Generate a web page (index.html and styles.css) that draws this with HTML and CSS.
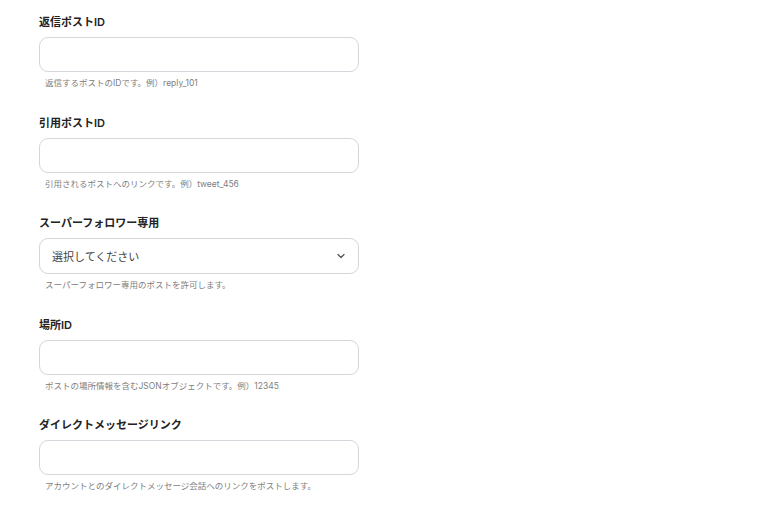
FILE: index.html
```html
<!DOCTYPE html>
<html lang="ja">
<head>
<meta charset="utf-8">
<link rel="stylesheet" href="styles.css">
</head>
<body>
<div class="form">
  <div class="field">
    <div class="label">返信ポストID</div>
    <div class="input"></div>
    <div class="help">返信するポストのIDです。例）reply_101</div>
  </div>
  <div class="field">
    <div class="label">引用ポストID</div>
    <div class="input"></div>
    <div class="help">引用されるポストへのリンクです。例）tweet_456</div>
  </div>
  <div class="field">
    <div class="label">スーパーフォロワー専用</div>
    <div class="input select">
      <span class="placeholder">選択してください</span>
      <svg class="chev" width="10" height="10" viewBox="0 0 10 10"><path d="M2 3.5 L5 6.5 L8 3.5" fill="none" stroke="#555" stroke-width="1.3" stroke-linecap="round" stroke-linejoin="round"/></svg>
    </div>
    <div class="help">スーパーフォロワー専用のポストを許可します。</div>
  </div>
  <div class="field">
    <div class="label">場所ID</div>
    <div class="input"></div>
    <div class="help">ポストの場所情報を含むJSONオブジェクトです。例）12345</div>
  </div>
  <div class="field">
    <div class="label">ダイレクトメッセージリンク</div>
    <div class="input"></div>
    <div class="help">アカウントとのダイレクトメッセージ会話へのリンクをポストします。</div>
  </div>
</div>
</body>
</html>
```
FILE: styles.css
```css
html, body {
  margin: 0;
  padding: 0;
  background: #ffffff;
}
body {
  font-family: Inter, "Noto Sans CJK JP", sans-serif;
  color: #222;
}
.form {
  padding: 14px 0 0 39px;
  display: flex;
  flex-direction: column;
  gap: 24.5px;
}
.field {
  width: 320px;
  display: flex;
  flex-direction: column;
}
.label {
  font-size: 11px;
  font-weight: 600;
  line-height: 16px;
  color: #222;
  margin-bottom: 7px;
}
.input {
  box-sizing: border-box;
  height: 35px;
  border: 1px solid #d4d6dc;
  border-radius: 9px;
  background: #fff;
}
.select {
  height: 36px;
  display: flex;
  align-items: center;
  justify-content: space-between;
  padding: 0 12px 0 12px;
}
.placeholder {
  font-size: 11px;
  color: #444;
}
.help {
  margin-top: 4px;
  padding-left: 6px;
  font-size: 8.5px;
  line-height: 14px;
  color: #808080;
}
```
